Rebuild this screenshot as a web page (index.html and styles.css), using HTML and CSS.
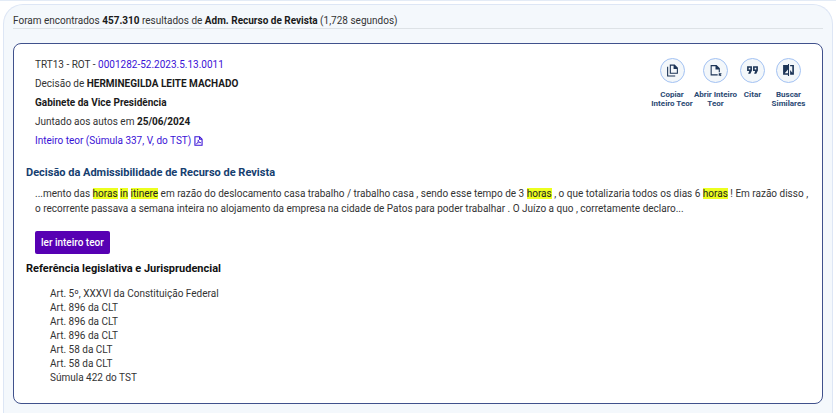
FILE: index.html
```html
<!DOCTYPE html>
<html lang="pt-BR">
<head>
    <meta charset="UTF-8">
    <meta name="viewport" content="width=device-width, initial-scale=1.0">
    <title>Pesquisa de Jurisprudência</title>
    <link rel="stylesheet" href="styles.css">
</head>
<body>
    <main class="results">
        <p class="summary">Foram encontrados <strong>457.310</strong> resultados de <strong>Adm. Recurso de Revista</strong> (1,728 segundos)</p>

        <article class="card">
            <header class="card-header">
                <div class="details">
                    <p>TRT13 - ROT - <a href="#">0001282-52.2023.5.13.0011</a></p>
                    <p>Decisão de <strong>HERMINEGILDA LEITE MACHADO</strong></p>
                    <p><strong>Gabinete da Vice Presidência</strong></p>
                    <p>Juntado aos autos em <strong>25/06/2024</strong></p>
                    <p><a href="#">Inteiro teor (Súmula 337, V, do TST)
                        <svg class="pdf-icon" viewBox="0 0 12 14" aria-hidden="true">
                            <path d="M1 1h6.500l3.500 3.500V13H1z M7.500 1v3.500H11" />
                            <path d="M3 11c2-1 3-3.500 2.600-5.500C6 8 7.500 9.500 9.300 9.300 7 8.800 5 9.500 3 11z" stroke-width="1" />
                        </svg></a></p>
                </div>
                <div class="actions">
                    <button class="action copy" type="button">
                        <span class="circle">
                            <svg viewBox="0 0 24 24" aria-hidden="true">
                                <path d="M7 1v17h15V7l-6-6H7zm7 2v6h6v7H9V3h5zM2 5v18h15v-2H4V5H2z" fill-rule="evenodd" />
                            </svg>
                        </span>
                        <span>Copiar Inteiro Teor</span>
                    </button>
                    <button class="action open" type="button">
                        <span class="circle">
                            <svg viewBox="0 0 24 24" aria-hidden="true">
                                <path d="M3 2v19h13v-2H5V4h7v6h6v5h2V8l-6-6H3z" />
                                <path d="M18 17h5v2h-2l2 2-1.500 1.500-2-2V22H18z" />
                            </svg>
                        </span>
                        <span>Abrir Inteiro Teor</span>
                    </button>
                    <button class="action quote" type="button">
                        <span class="circle">
                            <svg viewBox="0 0 24 24" aria-hidden="true">
                                <path d="M2 4h9v8l-3 6H4l2-5H2V4zm3 3v3h3V7H5zM13 4h9v8l-3 6h-4l2-5h-4V4zm3 3v3h3V7h-3z" fill-rule="evenodd" />
                            </svg>
                        </span>
                        <span>Citar</span>
                    </button>
                    <button class="action similar" type="button">
                        <span class="circle">
                            <svg viewBox="0 0 24 24" aria-hidden="true">
                                <path d="M11 0h2v22h-2v-2H2V2h9V0zM5 17h6v-7l-6 7zM15 2h7v18h-7v-9l4 5V4h-4V2z" fill-rule="evenodd" />
                            </svg>
                        </span>
                        <span>Buscar Similares</span>
                    </button>
                </div>
            </header>

            <section>
                <h2 class="title">Decisão da Admissibilidade de Recurso de Revista</h2>
                <p class="excerpt">...mento das <mark>horas</mark> <mark>in</mark> <mark>itinere</mark> em razão do deslocamento casa trabalho / trabalho casa , sendo esse tempo de 3 <mark>horas</mark> , o que totalizaria todos os dias 6 <mark>horas</mark> ! Em razão disso , o recorrente passava a semana inteira no alojamento da empresa na cidade de Patos para poder trabalhar . O Juízo a quo , corretamente declaro...</p>
                <button class="read-more" type="button">ler inteiro teor</button>
            </section>

            <section>
                <h2>Referência legislativa e Jurisprudencial</h2>
                <ul class="references">
                    <li>Art. 5º, XXXVI da Constituição Federal</li>
                    <li>Art. 896 da CLT</li>
                    <li>Art. 896 da CLT</li>
                    <li>Art. 896 da CLT</li>
                    <li>Art. 58 da CLT</li>
                    <li>Art. 58 da CLT</li>
                    <li>Súmula 422 do TST</li>
                </ul>
            </section>
        </article>
    </main>
</body>
</html>
```
FILE: styles.css
```css
* {
    margin: 0;
    padding: 0;
    box-sizing: border-box;
}

body {
    padding: 3px 3px 0;
    border-top: 1px solid #e3ebf6;
    background: #fff;
    color: #333;
    font-family: Roboto, sans-serif;
    font-size: 10px;
    line-height: 14px;
}

strong {
    color: #1a1a1a;
    font-weight: 700;
}

a {
    color: #3a12d6;
    text-decoration: none;
}

.results {
    padding: 9px 9px 9px;
    border: 1px solid #dde6f5;
    border-bottom: none;
    border-radius: 20px 20px 0 0;
    background: #f4f8fc;
}

.summary {
    border-bottom: 1px solid #dde2e6;
}

.card {
    margin-top: 14px;
    padding: 11px 12px 18px;
    border: 1px solid #40518c;
    border-radius: 8px;
    background: #fff;
}

.card-header {
    display: flex;
    justify-content: space-between;
    padding-left: 9px;
}

.details {
    line-height: 19px;
}

.pdf-icon {
    width: 9px;
    height: 10px;
    vertical-align: -2px;
    fill: none;
    stroke: currentColor;
    stroke-width: 1.5;
}

.actions {
    display: flex;
    align-items: flex-start;
    padding-top: 3px;
}

.action {
    display: flex;
    flex-direction: column;
    align-items: center;
    gap: 7px;
    border: none;
    background: none;
    color: #2b4a73;
    font-family: inherit;
    font-size: 8px;
    font-weight: 700;
    line-height: 9px;
    cursor: pointer;
}

.copy {
    width: 42px;
}

.open {
    width: 45px;
}

.quote {
    width: 29px;
}

.similar {
    width: 43px;
}

.circle {
    display: flex;
    align-items: center;
    justify-content: center;
    width: 25px;
    height: 25px;
    border: 1px solid #a3c2f3;
    border-radius: 50%;
    background: #f3f7fa;
}

.circle svg {
    width: 13px;
    height: 13px;
    fill: #1d3557;
}

h2 {
    color: #111;
    font-size: 11px;
    font-weight: 700;
    line-height: 16px;
}

.title {
    margin-top: 15px;
    color: #153e6f;
}

.excerpt {
    margin-top: 5px;
    padding-left: 9px;
    line-height: 15px;
}

mark {
    background: #ecff1f;
    color: #222;
}

.read-more {
    display: block;
    margin: 15px 9px 7px;
    padding: 0 6px;
    border: none;
    border-radius: 2px;
    background: #5700b3;
    color: #fff;
    font-family: inherit;
    font-size: 10px;
    font-weight: 500;
    line-height: 23px;
    cursor: pointer;
}

.references {
    margin-top: 10px;
    padding-left: 24px;
    list-style: none;
}
```
